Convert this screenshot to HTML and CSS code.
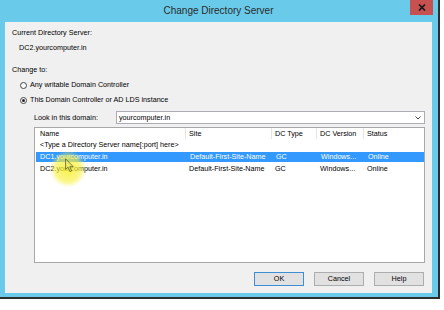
FILE: index.html
```html
<!DOCTYPE html>
<html>
<head>
<meta charset="utf-8">
<title>Change Directory Server</title>
<link rel="stylesheet" href="styles.css">
</head>
<body>
<div class="window">
  <div class="titlebar">
    <span class="title">Change Directory Server</span>
    <div class="close">
      <svg width="8" height="7" viewBox="0 0 8 7"><path d="M1 0.5 L7 6.5 M7 0.5 L1 6.5" stroke="#1a1a1a" stroke-width="1.7" fill="none"/></svg>
    </div>
  </div>
  <div class="client">
    <div class="line l1">Current Directory Server:</div>
    <div class="line l2">DC2.yourcomputer.in</div>
    <div class="line l3">Change to:</div>
    <div class="radio-row r1"><span class="radio"></span><span>Any writable Domain Controller</span></div>
    <div class="radio-row r2"><span class="radio checked"></span><span>This Domain Controller or AD LDS instance</span></div>
    <div class="look-row">
      <span class="look-label">Look in this domain:</span>
      <div class="combo">
        <span class="combo-text">yourcomputer.in</span>
        <svg class="chev" width="6" height="4" viewBox="0 0 6 4"><path d="M0.5 0.5 L3 3 L5.5 0.5" stroke="#444" stroke-width="1" fill="none"/></svg>
      </div>
    </div>
    <div class="list">
      <div class="row header">
        <span class="c c1">Name</span>
        <span class="c sep">Site</span>
        <span class="c sep">DC Type</span>
        <span class="c sep">DC Version</span>
        <span class="c sep">Status</span>
      </div>
      <div class="row">
        <span class="c c1 wide">&lt;Type a Directory Server name[:port] here&gt;</span>
      </div>
      <div class="row sel">
        <span class="c c1">DC1.yourcomputer.in</span>
        <span class="c">Default-First-Site-Name</span>
        <span class="c">GC</span>
        <span class="c">Windows...</span>
        <span class="c">Online</span>
      </div>
      <div class="row">
        <span class="c c1">DC2.yourcomputer.in</span>
        <span class="c">Default-First-Site-Name</span>
        <span class="c">GC</span>
        <span class="c">Windows...</span>
        <span class="c">Online</span>
      </div>
    </div>
    <div class="buttons">
      <div class="btn default">OK</div>
      <div class="btn">Cancel</div>
      <div class="btn">Help</div>
    </div>
  </div>
</div>
<div class="halo"></div>
<svg class="cursor" width="9" height="15" viewBox="0 0 8 13"><path d="M0.5 0.5 L0.5 10 L2.7 8 L4.4 12 L5.9 11.3 L4.3 7.5 L7.3 7.5 Z" fill="rgba(230,230,120,0.7)" stroke="rgba(70,70,40,0.75)" stroke-width="0.8"/></svg>
</body>
</html>
```

FILE: styles.css
```css
html, body {
  margin: 0;
  padding: 0;
  background: #ffffff;
}
body {
  width: 444px;
  height: 310px;
  overflow: hidden;
  position: relative;
  font-family: "Liberation Sans", Arial, sans-serif;
  font-size: 7.2px;
  color: #000;
}
.window {
  width: 427px;
  height: 293px;
  padding: 0 6px 4px 5px;
  background: #69caea;
  border-right: 2px solid #2e2e2e;
  border-bottom: 2px solid #2e2e2e;
  display: flex;
  flex-direction: column;
}
.titlebar {
  flex: 0 0 22px;
  height: 22px;
  position: relative;
  display: flex;
  align-items: center;
  justify-content: center;
}
.title {
  font-size: 10px;
  color: #2b2b2b;
  margin-top: -1px;
}
.close {
  position: absolute;
  right: -1px;
  top: 0;
  width: 23px;
  height: 15px;
  background: #c75050;
  display: flex;
  align-items: center;
  justify-content: center;
}
.client {
  flex: 1 1 auto;
  min-height: 0;
  background: #f0f0f0;
  padding: 5px 0 0 0;
  display: flex;
  flex-direction: column;
}
.client > * { flex-shrink: 0; }
.line {
  line-height: 12px;
  height: 12px;
  white-space: nowrap;
}
.l1 { padding-left: 7px; }
.l2 { padding-left: 14px; margin-top: 3px; }
.l3 { padding-left: 7px; margin-top: 10px; }
.radio-row {
  height: 12px;
  line-height: 12px;
  margin-top: 3px;
  padding-left: 15px;
  display: flex;
  align-items: center;
  gap: 3px;
  white-space: nowrap;
}
.radio {
  width: 5px;
  height: 5px;
  border: 1px solid #444;
  border-radius: 50%;
  background: #fff;
  display: flex;
  align-items: center;
  justify-content: center;
}
.radio.checked::after {
  content: "";
  width: 3px;
  height: 3px;
  border-radius: 50%;
  background: #222;
}
.look-row {
  margin-top: 5px;
  margin-left: 29px;
  margin-right: 7px;
  height: 13px;
  display: flex;
  align-items: center;
}
.look-label {
  width: 82px;
  white-space: nowrap;
}
.combo {
  flex: 1;
  height: 11px;
  border: 1px solid #abadb3;
  background: #fff;
  display: flex;
  align-items: center;
  justify-content: space-between;
  padding: 0 3px 0 2px;
}
.list {
  margin-top: 3px;
  margin-left: 29px;
  margin-right: 7px;
  height: 134px;
  border: 1px solid #a8a8a8;
  background: #fff;
}
.row {
  display: grid;
  grid-template-columns: 150px 86px 45px 47px 1fr;
  height: 12px;
  line-height: 12px;
  white-space: nowrap;
}
.row.header {
  height: 11px;
  line-height: 11px;
}
.c {
  padding-left: 4px;
  overflow: hidden;
}
.c1 { padding-left: 5px; }
.wide { grid-column: 1 / -1; }
.sep {
  border-left: 1px solid #e5e5e5;
  padding-left: 3px;
}
.row.sel {
  background: #3399ff;
  color: #fff;
  height: 10px;
  line-height: 10px;
  margin: 1px 0 1px 1px;
}
.row.sel .c1 { padding-left: 4px; }
.buttons {
  margin-top: 9px;
  padding-right: 8px;
  display: flex;
  justify-content: flex-end;
  gap: 10px;
}
.btn {
  width: 48px;
  height: 12px;
  line-height: 12px;
  text-align: center;
  background: #e1e1e1;
  border: 1px solid #adadad;
}
.btn.default {
  border-color: #3c8ed6;
}
.halo {
  position: absolute;
  left: 50px;
  top: 151px;
  width: 36px;
  height: 36px;
  border-radius: 50%;
  background: radial-gradient(circle, rgba(248,240,40,0.85) 0%, rgba(248,240,60,0.6) 50%, rgba(250,245,120,0) 72%);
  pointer-events: none;
}
.cursor {
  position: absolute;
  left: 65px;
  top: 158px;
}
```
